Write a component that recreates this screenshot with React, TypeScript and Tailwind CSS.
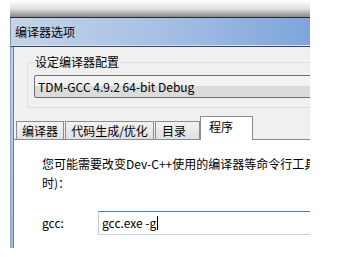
import React from "react";

const font = { fontFamily: '"Noto Sans CJK SC", "Noto Sans", sans-serif' };

export default function App() {
  return (
    <div
      className="w-[362px] h-[257px] bg-white overflow-hidden flex flex-col text-[12px] text-black"
      style={font}
    >
      {/* top shadow */}
      <div className="ml-[10px] w-[300px] h-[17px] bg-gradient-to-b from-white via-[#e2e2e2] to-[#8a8a8a]" />
      <div className="ml-[10px] w-[300px] h-[1px] bg-[#2a2a2a]" />
      {/* title bar */}
      <div className="ml-[10px] w-[300px] h-[27px] bg-gradient-to-r from-[#c4d4e8] via-[#a6c0e4] to-[#7ea5dc] flex items-center pl-[4px] border-l border-[#7f93ad]">
        <span className="leading-none">编译器选项</span>
      </div>
      <div className="ml-[10px] w-[300px] h-[1px] bg-[#d7e3f1]" />
      <div className="ml-[10px] w-[300px] h-[1px] bg-[#34476a]" />
      {/* body */}
      <div className="ml-[10px] w-[300px] h-[201px] flex">
        <div className="w-[4px] flex shrink-0">
          <div className="w-[1px] bg-[#8ea6c6]" />
          <div className="w-[2px] bg-gradient-to-b from-[#c0d2e8] to-[#9fb9dc]" />
          <div className="w-[1px] bg-[#5f7fb2]" />
        </div>
        <div className="flex-1 bg-[#f0f0f0] flex flex-col overflow-hidden">
          {/* group box */}
          <div className="ml-[13px] mt-[15px] w-[300px] h-[46px] shrink-0 rounded-[3px] border border-[#d5dfe5] relative pl-[6px] pt-[12px]">
            <span className="absolute left-[6px] top-[-9px] bg-[#f0f0f0] px-[1px] leading-[16px]">
              设定编译器配置
            </span>
            <div className="w-[290px] h-[23px] rounded-[2px] border border-[#707070] bg-gradient-to-b from-[#f2f2f2] from-50% to-[#dbdbdb] to-50% flex items-center pl-[3px]">
              <span className="leading-none whitespace-nowrap">TDM-GCC 4.9.2 64-bit Debug</span>
            </div>
          </div>
          {/* tabs */}
          <div className="mt-[8px] flex items-end h-[24px] shrink-0 border-b border-[#898c95] whitespace-nowrap">
            <div className="w-[2px] shrink-0" />
            <div className="h-[19px] -mb-[1px] flex items-center justify-center border border-[#898c95] bg-gradient-to-b from-[#f3f3f3] to-[#e0e0e0] w-[48px] shrink-0">
              编译器
            </div>
            <div className="h-[19px] -mb-[1px] ml-[1px] flex items-center justify-center border border-[#898c95] bg-gradient-to-b from-[#f3f3f3] to-[#e0e0e0] w-[89px] shrink-0">
              代码生成/优化
            </div>
            <div className="h-[19px] -mb-[1px] ml-[1px] flex items-center border border-[#898c95] bg-gradient-to-b from-[#f3f3f3] to-[#e0e0e0] w-[45px] pl-[6px] shrink-0">
              目录
            </div>
            <div className="h-[24px] -mb-[1px] flex items-center border border-b-0 border-[#898c95] bg-white w-[53px] pl-[8px] pb-[3px] shrink-0">
              程序
            </div>
          </div>
          {/* panel */}
          <div className="flex-1 bg-white pl-[28px] pt-[14px] flex flex-col">
            <div className="leading-[19px] whitespace-nowrap">
              您可能需要改变Dev-C++使用的编译器等命令行工具
            </div>
            <div className="leading-[19px]">时)：</div>
            <div className="mt-[19px] flex items-center h-[24px]">
              <span className="w-[56px] shrink-0">gcc:</span>
              <div className="w-[220px] h-[24px] border-t border-t-[#4c7dab] border-l border-l-[#b8cfe2] border-b border-b-[#bfd5e6] flex items-center pl-[3px]">
                <span>gcc.exe -g</span>
                <span className="inline-block w-[1px] h-[14px] bg-black ml-[1px]" />
              </div>
            </div>
          </div>
        </div>
      </div>
    </div>
  );
}
